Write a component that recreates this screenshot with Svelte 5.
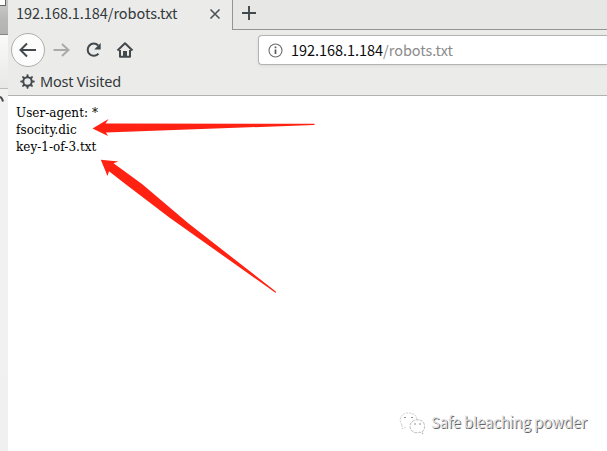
<script>
  const lines = ['User-agent: *', 'fsocity.dic', 'key-1-of-3.txt'];
</script>

<div class="screen">
  <aside>
    <div class="corner"></div>
    <svg width="8" height="451" viewBox="0 0 8 451">
      <path d="M0 34.5H8" stroke="#858584" />
      <path d="M0 88.5H8" stroke="#bcbcb9" />
      <path d="M0 97Q2 97.500 3 101.500" fill="none" stroke="#454a4c" stroke-width="2" />
    </svg>
  </aside>
  <main>
    <header class="tabs">
      <div class="tab">
        <span class="ui title">192.168.1.184/robots.txt</span>
        <svg class="close" width="12" height="12" viewBox="0 0 12 12"><path d="M1.500 1.500L10.500 10.500M10.500 1.500L1.500 10.500" stroke="#4c5356" stroke-width="1.6" /></svg>
      </div>
      <div class="rest">
        <svg width="14" height="14" viewBox="0 0 14 14"><path d="M0 7H14M7 0V14" stroke="#42494d" stroke-width="1.9" /></svg>
      </div>
    </header>
    <nav>
      <svg class="buttons" width="134" height="40" viewBox="0 0 134 40" fill="none">
        <circle cx="20" cy="20" r="16.500" fill="#fcfcfc" stroke="#adadab" />
        <path d="M28 20H13.500M19 13.500L12.500 20L19 26.500" stroke="#42494d" stroke-width="2" />
        <path d="M45.500 20H60M54 14L60.500 20L54 26" stroke="#a8abaa" stroke-width="2" />
        <path d="M90.200 15.500A6.100 6.100 0 1 0 90.500 23.600" stroke="#42494d" stroke-width="2" />
        <path d="M92.700 13V19.500H86.200Z" fill="#42494d" />
        <path d="M109.500 20.500L117 13.300L124.500 20.500M112 20V26.700H122V20" stroke="#42494d" stroke-width="2" stroke-linejoin="round" />
        <path d="M115 27V21H119V27Z" fill="#42494d" />
      </svg>
      <div class="url">
        <svg width="15" height="15" viewBox="0 0 15 15"><circle cx="7.500" cy="7.500" r="6.500" fill="none" stroke="#6c6c6c" stroke-width="1.100" /><path d="M7.500 6.500V11M7.500 3.500V5.300" stroke="#595959" stroke-width="1.700" /></svg>
        <span class="ui address"><b>192.168.1.184</b>/robots.txt</span>
      </div>
    </nav>
    <div class="bookmarks">
      <svg width="15" height="15" viewBox="-7.500 -7.500 15 15">
        <circle r="4.200" fill="none" stroke="#454b4e" stroke-width="2" />
        {#each [0, 45, 90, 135, 180, 225, 270, 315] as a}
          <path d="M-1.300 -4.600L-0.700 -7.200H0.700L1.300 -4.600Z" fill="#454b4e" transform="rotate({a})" />
        {/each}
      </svg>
      <span class="ui visited">Most Visited</span>
    </div>
    <section>
      {#each lines as line}
        <div>{line}</div>
      {/each}
    </section>
    <footer>
      <svg width="28" height="24" viewBox="0 0 28 24" fill="none" stroke="#c4c4c4" stroke-width=".8">
        <path d="M3 13C-1 8 2 1 9 1C15 1 18 4 18 8M3 13L3 17L7 15" stroke-dasharray="2 1" />
        <path d="M23 20C26 18 27 12 23 9C18 6 11 9 11 14C11 20 17 22 21 20L24 22Z" stroke="#aaa" stroke-dasharray="3 1" />
        <path d="M5 5.500H7M12 5.500H14M15 12H17M20 12H22" stroke="#777" />
      </svg>
      <span>Safe bleaching powder</span>
    </footer>
  </main>
  <svg class="arrows" width="607" height="451" viewBox="0 0 607 451" fill="#ff2212">
    <path d="M92.500 128.500L108.500 119L105.500 123.500L314 123.700Q315.500 124.300 314 125L106 132.500L108 136Z" />
    <path d="M100.800 159.800L118.500 161.500L113.500 163.200L142 184L188 223L275.800 291.500V293L170 218L126 184.500L109 171.200L107.500 176Z" />
  </svg>
</div>

<style>
  :global(body) { margin: 0; }
  .screen { width: 607px; height: 451px; display: flex; position: relative; overflow: hidden; background: #fff; }
  aside { width: 8px; flex: none; background: linear-gradient(#c4c4c2 0 8px, #b8b8b6 20px, #b2b2b0 34px, #fafafa 35px, #e8e8e6 88px, #f1f1f1 89px, #f0f0f0); position: relative; }
  .corner { position: absolute; width: 5px; height: 5px; background: #fff; border: solid #666; border-width: 0 1px 1px 0; }
  aside svg { display: block; }
  main { flex: 1; min-width: 0; display: flex; flex-direction: column; }
  .tabs { height: 30px; display: flex; background: #ebebea; flex: none; }
  .tab { width: 224px; display: flex; align-items: center; box-sizing: border-box; padding: 0 11px 2px 8px; justify-content: space-between; }
  .rest { flex: 1; border-left: 1px solid #949493; border-bottom: 1px solid #949493; background: #e7e7e5; padding: 6px 0 0 9px; box-sizing: border-box; }
  .ui { font-family: "Noto Sans", "Open Sans", sans-serif; font-size: 14.500px; line-height: 20px; white-space: nowrap; color: #33393b; }
  .title { font-family: "Noto Sans CJK SC", sans-serif; letter-spacing: -.06px; width: 163px; margin-bottom: 2px; }
  .visited { letter-spacing: -.2px; margin-bottom: 2px; }
  nav { height: 40px; background: #ebebea; display: flex; flex: none; }
  .buttons { flex: none; }
  .url { margin: 5px 0 0 116px; flex: 1; height: 30px; box-sizing: border-box; border: 1px solid #b3b3b1; border-right: 0; border-radius: 4px 0 0 4px; background: #fff; box-shadow: 0 1px 3px #0001; display: flex; align-items: center; padding-left: 9px; gap: 8px; }
  .address { font-family: "Noto Sans CJK SC", sans-serif; color: #8c8c8c; letter-spacing: -.04px; }
  b { font-weight: 400; color: #0c0c0d; }
  .bookmarks { height: 26px; box-sizing: border-box; border-bottom: 1px solid #b1b1af; background: #ebebea; display: flex; align-items: center; padding: 0 0 2px 12px; gap: 5px; flex: none; }
  section { flex: 1; padding: 8px; font: 13.333px/17px "DejaVu Serif", serif; font-stretch: condensed; color: #000; letter-spacing: .04px; }
  footer { display: flex; height: 51px; padding-left: 391px; flex: none; gap: 4px; }
  footer svg { margin-top: 12px; flex: none; }
  footer span { font: 15px/24px "Noto Sans CJK SC", sans-serif; letter-spacing: -.18px; margin-top: 10px; white-space: nowrap; color: #e2e2e2; text-shadow: 1px 1px 0 #666; }
  .arrows { position: absolute; inset: 0; pointer-events: none; }
</style>
